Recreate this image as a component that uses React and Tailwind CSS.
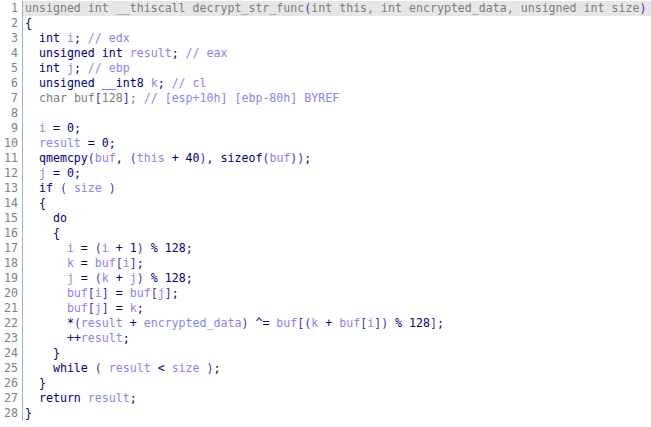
import React from "react";

const LINES = [
  { text: "unsigned int __thiscall decrypt_str_func(int this, int encrypted_data, unsigned int size)", mode: "gray" },
  { text: "{" },
  { text: "  int i; // edx" },
  { text: "  unsigned int result; // eax" },
  { text: "  int j; // ebp" },
  { text: "  unsigned __int8 k; // cl" },
  { text: "  char buf[128]; // [esp+10h] [ebp-80h] BYREF", mode: "gray" },
  { text: "" },
  { text: "  i = 0;" },
  { text: "  result = 0;" },
  { text: "  qmemcpy(buf, (this + 40), sizeof(buf));" },
  { text: "  j = 0;" },
  { text: "  if ( size )" },
  { text: "  {" },
  { text: "    do" },
  { text: "    {" },
  { text: "      i = (i + 1) % 128;" },
  { text: "      k = buf[i];" },
  { text: "      j = (k + j) % 128;" },
  { text: "      buf[i] = buf[j];" },
  { text: "      buf[j] = k;" },
  { text: "      *(result + encrypted_data) ^= buf[(k + buf[i]) % 128];" },
  { text: "      ++result;" },
  { text: "    }" },
  { text: "    while ( result < size );" },
  { text: "  }" },
  { text: "  return result;" },
  { text: "}" },
];

const VARS = new Set(["i", "j", "k", "result", "buf", "this", "size", "encrypted_data"]);

const COLORS = {
  plain: "text-[#000080]",
  var: "text-[#8585f2]",
  bracket: "text-[#3b2fc4]",
  comment: "text-[#8585f2]",
  gray: "text-[#7d7d7d]",
};

function tokenize(text, mode) {
  const out = [];
  const re = /(\/\/.*$)|([A-Za-z_][A-Za-z0-9_]*)|(\d+)|([()\[\]])|(\s+)|(.)/g;
  let m;
  while ((m = re.exec(text)) !== null) {
    let kind = "plain";
    if (m[1]) kind = "comment";
    else if (m[4]) kind = "bracket";
    else if (m[5]) kind = "space";
    else if (mode === "gray") kind = "gray";
    else if (m[2] && VARS.has(m[2])) kind = "var";
    out.push({ t: m[0], kind });
  }
  return out;
}

function CodeLine({ n, line }) {
  const tokens = tokenize(line.text, line.mode);
  const active = n === 1;
  return (
    <div className="flex h-[15px]">
      <div className="w-[18px] shrink-0 text-right text-[#808080]">{n}</div>
      <div className="w-[4px] shrink-0" />
      <div className="w-[1px] shrink-0 bg-[#9fb4cc]" />
      <div className={"flex-1 pl-[2px] whitespace-pre " + (active ? "bg-[#e6e6e6]" : "")}>
        {tokens.map((tok, i) =>
          tok.kind === "space" ? (
            <span key={i}>{tok.t}</span>
          ) : (
            <span key={i} className={COLORS[tok.kind]}>
              {tok.t}
            </span>
          )
        )}
      </div>
    </div>
  );
}

export default function App() {
  return (
    <div className="w-[651px] h-[427px] overflow-hidden bg-white pt-[1px] font-['DejaVu_Sans_Mono',monospace] text-[11.6px] leading-[15px]">
      {LINES.map((line, idx) => (
        <CodeLine key={idx} n={idx + 1} line={line} />
      ))}
    </div>
  );
}
